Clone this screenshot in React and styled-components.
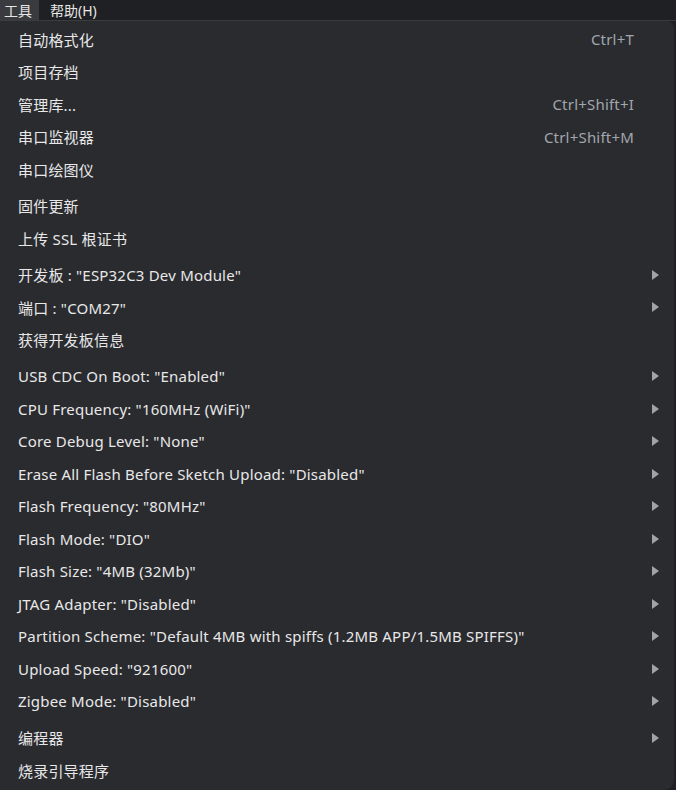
import React from 'react';
import styled, { createGlobalStyle } from 'styled-components';

const GlobalStyle = createGlobalStyle`
  html, body {
    margin: 0;
    padding: 0;
    background: #1f2023;
    overflow: hidden;
  }
  body {
    font-family: "Noto Sans", "Noto Sans CJK SC", sans-serif;
  }
`;

const Page = styled.div`
  width: 676px;
  height: 790px;
  display: flex;
  flex-direction: column;
  background: #1f2023;
`;

const MenuBar = styled.div`
  height: 20px;
  display: flex;
  align-items: stretch;
  background: #1f2023;
  border-bottom: 1px solid #3b3c40;
`;

const BarItem = styled.div`
  display: flex;
  align-items: center;
  padding: 0 7px 0 4px;
  margin-right: 7px;
  font-size: 14px;
  color: #e6e6e6;
  background: ${p => (p.active ? '#3a3b3f' : 'transparent')};
`;

const Panel = styled.div`
  flex: 1;
  margin-right: 2px;
  background: #2a2b2f;
  border-radius: 0 8px 10px 0;
  padding-top: 2px;
  display: flex;
  flex-direction: column;
`;

const Row = styled.div`
  height: 32.5px;
  display: flex;
  align-items: center;
  padding: 0 14px 0 18px;
  font-size: 15px;
  letter-spacing: 0.2px;
  color: #e8e8e8;
  white-space: nowrap;
`;

const Label = styled.span`
  flex: 1;
`;

const Shortcut = styled.span`
  color: #a3a7ad;
  margin-right: 26px;
`;

const Arrow = styled.span`
  width: 0;
  height: 0;
  border-top: 5px solid transparent;
  border-bottom: 5px solid transparent;
  border-left: 7px solid #a0a3a8;
  margin-right: 1px;
`;

const Separator = styled.div`
  height: 4px;
`;

const groups = [
  [
    { label: '自动格式化', shortcut: 'Ctrl+T' },
    { label: '项目存档' },
    { label: '管理库...', shortcut: 'Ctrl+Shift+I' },
    { label: '串口监视器', shortcut: 'Ctrl+Shift+M' },
    { label: '串口绘图仪' },
  ],
  [
    { label: '固件更新' },
    { label: '上传 SSL 根证书' },
  ],
  [
    { label: '开发板 : "ESP32C3 Dev Module"', sub: true },
    { label: '端口 : "COM27"', sub: true },
    { label: '获得开发板信息' },
  ],
  [
    { label: 'USB CDC On Boot: "Enabled"', sub: true },
    { label: 'CPU Frequency: "160MHz (WiFi)"', sub: true },
    { label: 'Core Debug Level: "None"', sub: true },
    { label: 'Erase All Flash Before Sketch Upload: "Disabled"', sub: true },
    { label: 'Flash Frequency: "80MHz"', sub: true },
    { label: 'Flash Mode: "DIO"', sub: true },
    { label: 'Flash Size: "4MB (32Mb)"', sub: true },
    { label: 'JTAG Adapter: "Disabled"', sub: true },
    { label: 'Partition Scheme: "Default 4MB with spiffs (1.2MB APP/1.5MB SPIFFS)"', sub: true },
    { label: 'Upload Speed: "921600"', sub: true },
    { label: 'Zigbee Mode: "Disabled"', sub: true },
  ],
  [
    { label: '编程器', sub: true },
    { label: '烧录引导程序' },
  ],
];

export default function App() {
  return (
    <Page>
      <GlobalStyle />
      <MenuBar>
        <BarItem active>工具</BarItem>
        <BarItem>帮助(H)</BarItem>
      </MenuBar>
      <Panel>
        {groups.map((group, gi) => (
          <React.Fragment key={gi}>
            {gi > 0 && <Separator />}
            {group.map(item => (
              <Row key={item.label}>
                <Label>{item.label}</Label>
                {item.shortcut && <Shortcut>{item.shortcut}</Shortcut>}
                {item.sub && <Arrow />}
              </Row>
            ))}
          </React.Fragment>
        ))}
      </Panel>
    </Page>
  );
}
